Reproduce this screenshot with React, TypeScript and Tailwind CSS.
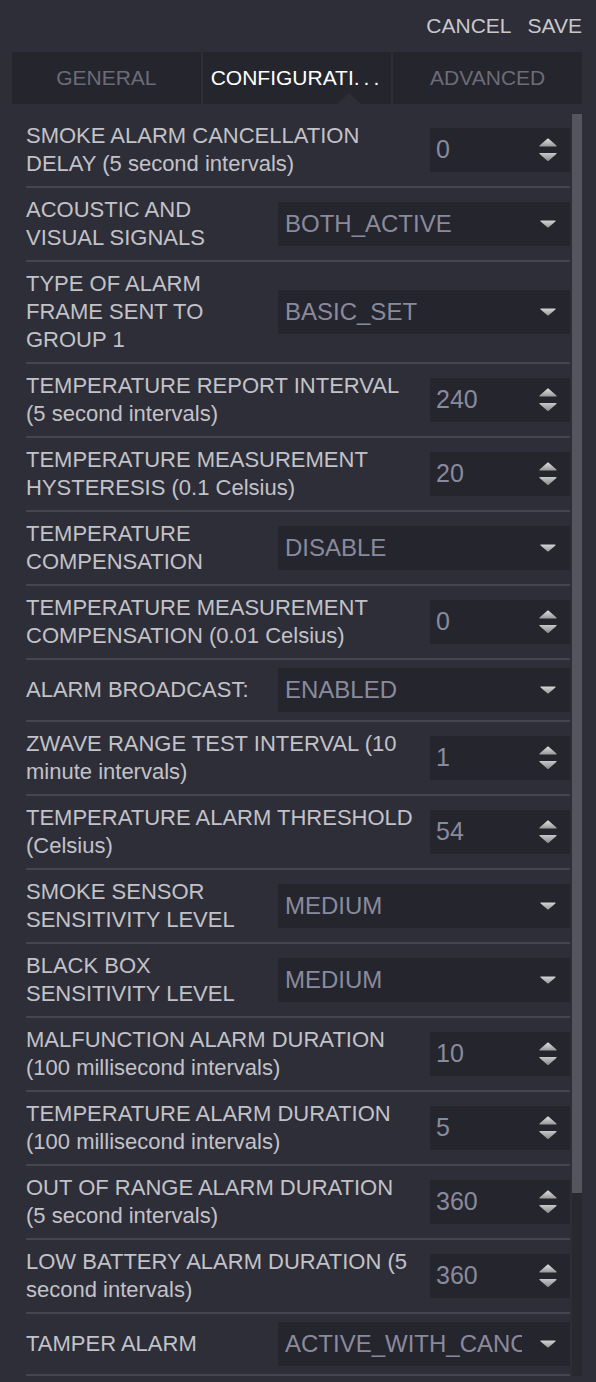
import React from "react";

type Field =
  | { kind: "number"; label: string; value: string }
  | { kind: "select"; label: string; value: string };

const fields: Field[] = [
  { kind: "number", label: "SMOKE ALARM CANCELLATION DELAY (5 second intervals)", value: "0" },
  { kind: "select", label: "ACOUSTIC AND VISUAL SIGNALS", value: "BOTH_ACTIVE" },
  { kind: "select", label: "TYPE OF ALARM FRAME SENT TO GROUP 1", value: "BASIC_SET" },
  { kind: "number", label: "TEMPERATURE REPORT INTERVAL (5 second intervals)", value: "240" },
  { kind: "number", label: "TEMPERATURE MEASUREMENT HYSTERESIS (0.1 Celsius)", value: "20" },
  { kind: "select", label: "TEMPERATURE COMPENSATION", value: "DISABLE" },
  { kind: "number", label: "TEMPERATURE MEASUREMENT COMPENSATION (0.01 Celsius)", value: "0" },
  { kind: "select", label: "ALARM BROADCAST:", value: "ENABLED" },
  { kind: "number", label: "ZWAVE RANGE TEST INTERVAL (10 minute intervals)", value: "1" },
  { kind: "number", label: "TEMPERATURE ALARM THRESHOLD (Celsius)", value: "54" },
  { kind: "select", label: "SMOKE SENSOR SENSITIVITY LEVEL", value: "MEDIUM" },
  { kind: "select", label: "BLACK BOX SENSITIVITY LEVEL", value: "MEDIUM" },
  { kind: "number", label: "MALFUNCTION ALARM DURATION (100 millisecond intervals)", value: "10" },
  { kind: "number", label: "TEMPERATURE ALARM DURATION (100 millisecond intervals)", value: "5" },
  { kind: "number", label: "OUT OF RANGE ALARM DURATION (5 second intervals)", value: "360" },
  { kind: "number", label: "LOW BATTERY ALARM DURATION (5 second intervals)", value: "360" },
  { kind: "select", label: "TAMPER ALARM", value: "ACTIVE_WITH_CANCELLATION" },
];

function Spinner() {
  return (
    <svg width="18" height="24" viewBox="0 0 18 24" className="absolute right-[13px] top-[10px]">
      <defs>
        <linearGradient id="spinUp" x1="0" y1="0" x2="0" y2="1">
          <stop offset="0" stopColor="#dcdcdc" />
          <stop offset="1" stopColor="#9c9c9c" />
        </linearGradient>
        <linearGradient id="spinDown" x1="0" y1="0" x2="0" y2="1">
          <stop offset="0" stopColor="#c4c4c4" />
          <stop offset="1" stopColor="#8e8e8e" />
        </linearGradient>
      </defs>
      <path d="M9 1 L17 8 L1 8 Z" fill="url(#spinUp)" stroke="url(#spinUp)" strokeWidth="1.2" strokeLinejoin="round" />
      <path d="M1 15.5 L17 15.5 L9 22.5 Z" fill="url(#spinDown)" stroke="url(#spinDown)" strokeWidth="1.2" strokeLinejoin="round" />
    </svg>
  );
}

function Caret() {
  return (
    <svg width="16" height="8" viewBox="0 0 16 8" className="absolute right-[14px] top-[18px]">
      <defs>
        <linearGradient id="caret" x1="0" y1="0" x2="0" y2="1">
          <stop offset="0" stopColor="#d0d0d0" />
          <stop offset="1" stopColor="#9e9e9e" />
        </linearGradient>
      </defs>
      <path d="M1 1 L15 1 L8 7 Z" fill="url(#caret)" stroke="url(#caret)" strokeWidth="1.2" strokeLinejoin="round" />
    </svg>
  );
}

function Row({ field }: { field: Field }) {
  const isSelect = field.kind === "select";
  return (
    <div className={`flex items-center ${isSelect ? "gap-2" : "gap-3"} py-2 border-b-2 border-[#45454f]`}>
      <div
        className={`${isSelect ? "w-[244px] shrink-0" : "flex-1 min-w-0"} text-[22px] leading-[28px] text-[#c2c2c8]`}
      >
        {field.label}
      </div>
      {isSelect ? (
        <div className="relative flex-1 min-w-0 h-[44px] bg-[#25252d] flex items-center pl-[7px] pr-[48px]">
          <span className="block min-w-0 overflow-hidden whitespace-nowrap text-[24px] text-[#8a8a9e]">{field.value}</span>
          <Caret />
        </div>
      ) : (
        <div className="relative shrink-0 w-[140px] h-[44px] bg-[#25252d] flex items-center pl-[6px]">
          <span className="text-[25px] text-[#8a8a9e]">{field.value}</span>
          <Spinner />
        </div>
      )}
    </div>
  );
}

export default function App() {
  return (
    <div className="w-[596px] min-h-[1382px] bg-[#2e2e38] font-['Liberation_Sans',Arial,sans-serif]">
      <div className="flex justify-end gap-[16px] pt-3 pr-[14px] text-[21px] leading-[28px] text-[#c8c8cc]">
        <span>CANCEL</span>
        <span>SAVE</span>
      </div>

      <div className="mt-3 ml-3 mr-[14px] grid grid-cols-3 gap-[2px] h-[52px] text-[21px]">
        <div className="bg-[#25252d] flex items-center justify-center text-[#6c6c78]">GENERAL</div>
        <div className="relative bg-[#25252d] flex items-center justify-center text-white">
          <span>
            CONFIGURATI<span className="tracking-[4px]">...</span>
          </span>
          <span className="absolute bottom-0 left-[134px] w-0 h-0 border-l-[12px] border-r-[12px] border-b-[11px] border-l-transparent border-r-transparent border-b-[#2e2e38]" />
        </div>
        <div className="bg-[#25252d] flex items-center justify-center text-[#6c6c78]">ADVANCED</div>
      </div>

      <div className="flex mt-[10px] ml-[26px] mr-[14px] gap-[2px]">
        <div className="flex-1 min-w-0">
          {fields.map((f, i) => (
            <Row key={i} field={f} />
          ))}
        </div>
        <div className="w-[10px] shrink-0 flex flex-col">
          <div className="h-[1079px] bg-[#55555f]" />
          <div className="flex-1 bg-[#28282f]" />
        </div>
      </div>
    </div>
  );
}
